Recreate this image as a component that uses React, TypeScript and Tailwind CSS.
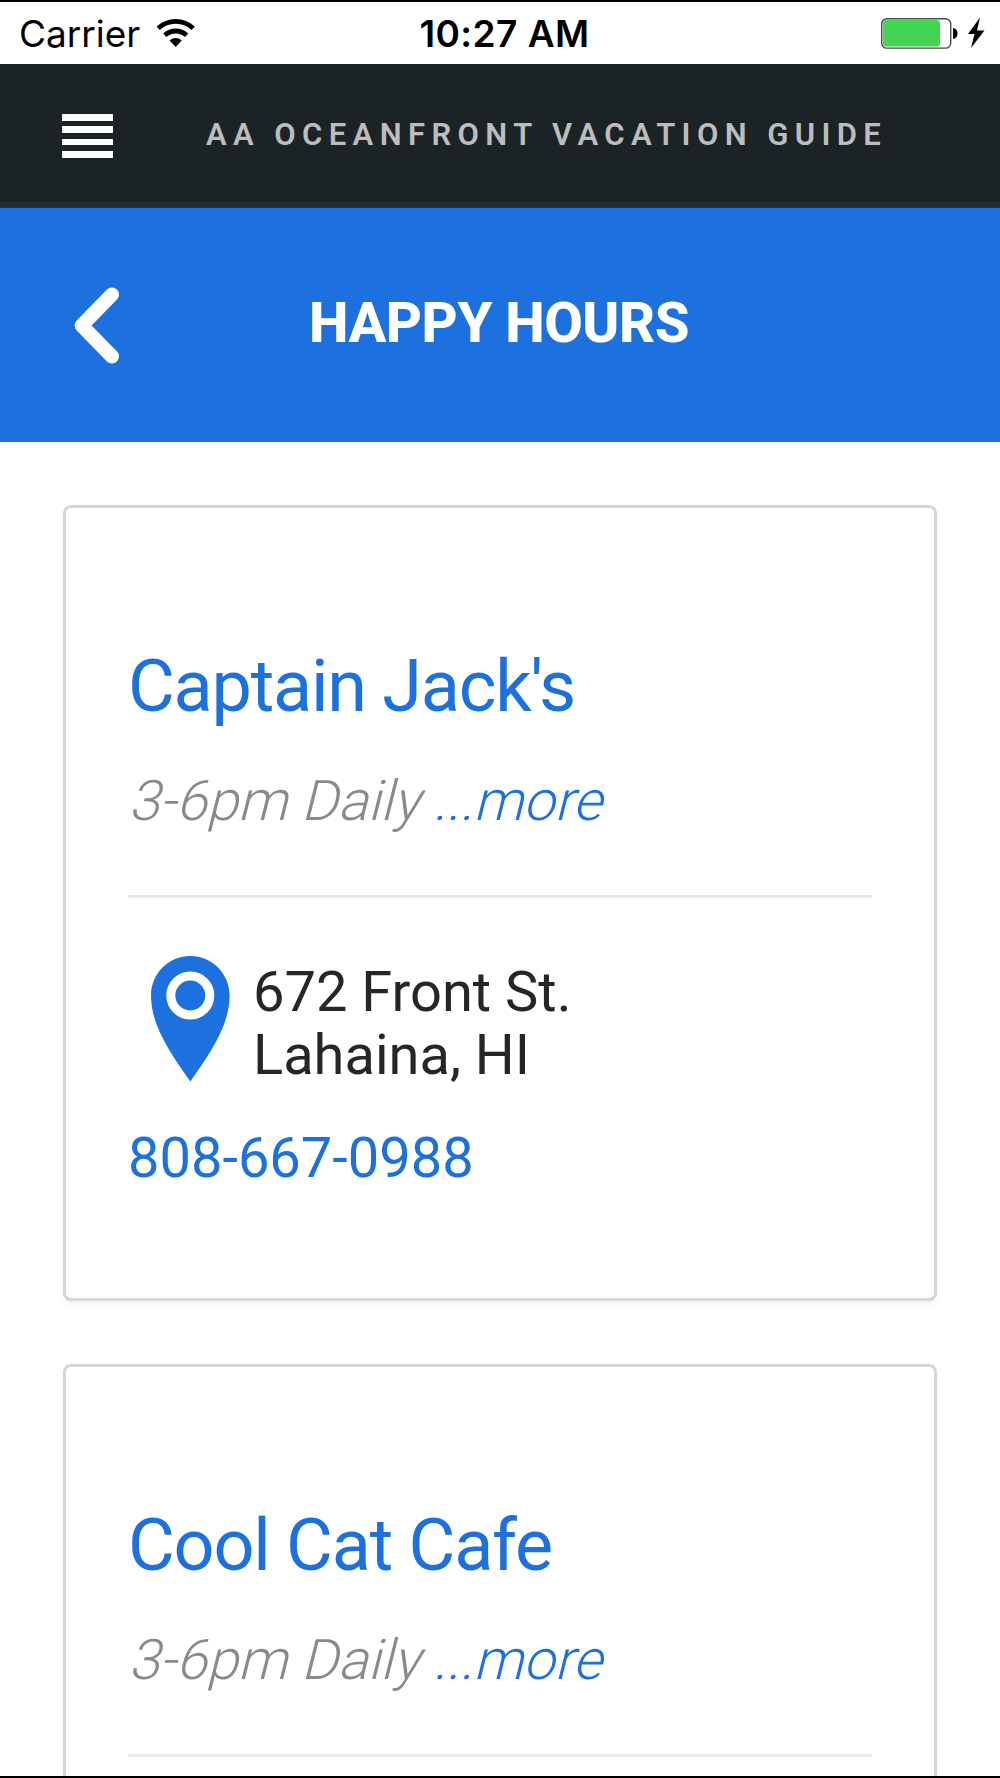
import React from 'react'

interface Place {
    name: string
    hours: string
    address?: string[]
    phone?: string
}

const places: Place[] = [
    { name: "Captain Jack's", hours: '3-6pm Daily', address: ['672 Front St.', 'Lahaina, HI'], phone: '808-667-0988' },
    { name: 'Cool Cat Cafe', hours: '3-6pm Daily' },
]

function StatusBar() {
    return (
        <div className="flex h-16 shrink-0 items-center border-t-2 border-black bg-white pr-[14px] pl-[19px] font-['Inter',sans-serif] text-[37px] leading-[64px] text-black">
            <div className="flex flex-1 items-center">
                <span className="w-[137px] pt-0.5 whitespace-nowrap">Carrier</span>
                <svg width="40" height="30" viewBox="0 0 40 30" fill="none" stroke="#000" strokeWidth="4.8">
                    <path d="M2.2 10.3A25.6 25.6 0 0 1 37.2 10.3" />
                    <path d="M8.8 17.3A16 16 0 0 1 30.6 17.3" />
                    <path d="M19.7 29L13.6 22.4A9 9 0 0 1 25.8 22.4Z" fill="#000" stroke="none" />
                </svg>
            </div>
            <span className="pt-0.5 pl-1 font-semibold tracking-[0.45px] whitespace-nowrap">10:27 AM</span>
            <div className="flex flex-1 items-center justify-end">
                <svg width="106" height="32" viewBox="0 0 106 32">
                    <rect x="1.7" y="1.7" width="69" height="29.4" rx="5" fill="#fff" stroke="#4a474a" strokeWidth="1.4" />
                    <rect x="3" y="3" width="57" height="26.6" rx="3" fill="#44d552" />
                    <path d="M73 11C79 11 79 22 73 22Z" fill="#000" />
                    <path d="M100 0.5L88 17H94.5L91 31L104.5 13.5H97Z" fill="#000" />
                </svg>
            </div>
        </div>
    )
}

function NavBar() {
    return (
        <div className="flex h-36 shrink-0 items-start border-b-6 border-[#252c2f] bg-[#1c2326] pl-[62px]">
            <div className="mt-[50px] flex w-[51px] flex-col gap-[5.9px]">
                <div className="h-[6.5px] bg-white" />
                <div className="h-[6.5px] bg-white" />
                <div className="h-[6.5px] bg-white" />
                <div className="h-[6.5px] bg-white" />
            </div>
            <h1 className="mt-[47px] ml-[93px] text-[31px] leading-[48px] font-semibold tracking-[6.4px] whitespace-nowrap text-[#bdbdbd]">
                AA OCEANFRONT VACATION GUIDE
            </h1>
        </div>
    )
}

function PageHeader() {
    return (
        <div className="flex h-[234px] shrink-0 items-start bg-[#1c71df] pl-[74px] text-white">
            <svg className="mt-[79px]" width="46" height="77" viewBox="0 0 46 77" fill="none" stroke="currentColor" strokeWidth="14" strokeLinecap="round" strokeLinejoin="round">
                <path d="M38 7.5L7.7 38.5L38 69.5" />
            </svg>
            <h2 className="mt-[82px] ml-[189px] text-[56px] leading-[66px] font-extrabold tracking-[-0.5px] whitespace-nowrap">HAPPY HOURS</h2>
        </div>
    )
}

function PlaceCard({ place }: { place: Place }) {
    return (
        <div className="h-[796px] shrink-0 rounded-lg border-3 border-[#d6d6d6] bg-white px-[62px] pt-[137px] shadow-[0_3px_6px_rgba(0,0,0,0.06)]">
            <h3 className="text-[72px] leading-[84px] tracking-[-1.25px] whitespace-nowrap text-[#1c71df]">{place.name}</h3>
            <p className="mt-[39px] -skew-x-[14deg] pl-[5px] text-[56px] leading-[66px] font-light whitespace-nowrap text-[#8a8a8a]">
                {place.hours} <span className="text-[#1c71df]">...more</span>
            </p>
            <div className="mt-[61px] h-[3px] bg-[#e9e9e9]" />
            {place.address && (
                <div className="mt-[58px] flex h-[130px] pl-[23px]">
                    <svg width="79" height="126" viewBox="0 0 79 126">
                        <path d="M39.3 0C17.6 0 0 17.6 0 39.5C0 70 20 98 39.3 125.5C58.6 98 78.6 70 78.6 39.5C78.6 17.6 61 0 39.3 0Z" fill="#1c71df" />
                        <circle cx="39.3" cy="39.5" r="19.5" fill="none" stroke="#fff" strokeWidth="9" />
                    </svg>
                    <div className="mt-[5px] ml-[23px] text-[56px] leading-[62.5px] whitespace-nowrap text-[#262626]">
                        {place.address.map((line) => (
                            <p key={line}>{line}</p>
                        ))}
                    </div>
                </div>
            )}
            {place.phone && <p className="mt-[39px] text-[56px] leading-[66px] whitespace-nowrap text-[#1c71df]">{place.phone}</p>}
        </div>
    )
}

export default function App() {
    return (
        <div className="flex h-[1778px] w-[1000px] flex-col overflow-hidden border-b-2 border-black bg-white font-['Roboto',sans-serif]">
            <StatusBar />
            <NavBar />
            <PageHeader />
            <div className="flex min-h-0 flex-1 flex-col gap-[63px] overflow-hidden px-[63px] pt-[63px]">
                {places.map((place) => (
                    <PlaceCard key={place.name} place={place} />
                ))}
            </div>
        </div>
    )
}
